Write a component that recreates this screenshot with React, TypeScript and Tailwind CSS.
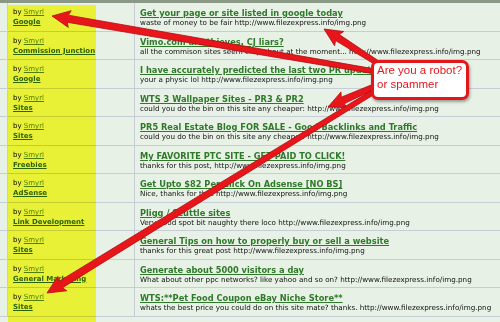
import React from "react";

type Row = { cat: string; title: string; desc: string };

const URL = "http://www.filezexpress.info/img.png";

const rows: Row[] = [
  { cat: "Google", title: "Get your page or site listed in google today", desc: `waste of money to be fair ${URL}` },
  { cat: "Commission Junction", title: "Vimo.com are thieves, CJ liars?", desc: `all the commison sites seem crap about at the moment... ${URL}` },
  { cat: "Google", title: "I have accurately predicted the last two PR updates", desc: `your a physic lol ${URL}` },
  { cat: "Sites", title: "WTS 3 Wallpaper Sites - PR3 & PR2", desc: `could you do the bin on this site any cheaper: ${URL}` },
  { cat: "Sites", title: "PR5 Real Estate Blog FOR SALE - Good Backlinks and Traffic", desc: `could you do the bin on this site any cheaper: ${URL}` },
  { cat: "Freebies", title: "My FAVORITE PTC SITE - GET PAID TO CLICK!", desc: `thanks for this post, ${URL}` },
  { cat: "AdSense", title: "Get Upto $82 Per Click On Adsense [NO BS]", desc: `Nice, thanks for that ${URL}` },
  { cat: "Link Development", title: "Pligg / Scuttle sites", desc: `Very good spot bit naughty there loco ${URL}` },
  { cat: "Sites", title: "General Tips on how to properly buy or sell a website", desc: `thanks for this great post ${URL}` },
  { cat: "General Marketing", title: "Generate about 5000 visitors a day", desc: `What about other ppc networks? like yahoo and so on? ${URL}` },
  { cat: "Sites", title: "WTS:**Pet Food Coupon eBay Niche Store**", desc: `whats the best price you could do on this site mate? thanks. ${URL}` },
];

function arrowPoints(x1: number, y1: number, x2: number, y2: number) {
  const dx = x2 - x1;
  const dy = y2 - y1;
  const L = Math.hypot(dx, dy);
  const ux = dx / L;
  const uy = dy / L;
  const nx = -uy;
  const ny = ux;
  const headLen = 16;
  const headW = 8.5;
  const tailW = 2.4;
  const neckW = 3.6;
  const bx = x2 - ux * headLen;
  const by = y2 - uy * headLen;
  const pts = [
    [x1 + nx * tailW, y1 + ny * tailW],
    [bx + nx * neckW, by + ny * neckW],
    [bx + nx * headW - ux * 2, by + ny * headW - uy * 2],
    [x2, y2],
    [bx - nx * headW - ux * 2, by - ny * headW - uy * 2],
    [bx - nx * neckW, by - ny * neckW],
    [x1 - nx * tailW, y1 - ny * tailW],
  ];
  return pts.map((p) => `${p[0].toFixed(1)},${p[1].toFixed(1)}`).join(" ");
}

const arrows: [number, number, number, number][] = [
  [378, 72, 52, 16],
  [382, 66, 324, 29],
  [380, 84, 328, 107],
  [380, 88, 47, 293],
];

export default function App() {
  return (
    <div
      className="relative w-[500px] h-[322px] overflow-hidden bg-[#e8f1e6]"
      style={{ fontFamily: '"DejaVu Sans", Verdana, sans-serif' }}
    >
      <div className="h-[3px] bg-[#8a9886]" />
      {rows.map((r, i) => (
        <div
          key={i}
          className={`flex border-b border-[#c6cdd8] ${i % 2 === 0 ? "h-[29px]" : "h-[28px]"}`}
        >
          <div className="w-[8px] shrink-0 border-r border-[#c6cdd8]" />
          <div className="w-[127px] shrink-0 border-r border-[#c6cdd8] pl-[5px] pt-[5px] text-[7px] leading-[9.5px] whitespace-nowrap">
            <div className="text-black">
              by <span className="text-[#4f7f16] underline">Smyrl</span>
            </div>
            <div className="font-bold text-[#2c6414] underline">{r.cat}</div>
          </div>
          <div className="flex-1 min-w-0 pl-[5px] pt-[5px] whitespace-nowrap overflow-hidden">
            <div className="text-[8.25px] leading-[10px] font-bold text-[#2f7a2a] underline">{r.title}</div>
            <div className="text-[7.2px] leading-[9px] text-[#111]">{r.desc}</div>
          </div>
        </div>
      ))}

      <div className="absolute left-[8px] top-[5px] w-[88px] h-[317px] bg-[#ffff3c] mix-blend-multiply" />

      <svg className="absolute left-0 top-0 pointer-events-none" width={500} height={322} viewBox="0 0 500 322">
        {arrows.map((a, i) => (
          <polygon
            key={i}
            points={arrowPoints(a[0], a[1], a[2], a[3])}
            fill="#e8161b"
            stroke="#b00c10"
            strokeWidth={0.8}
            strokeLinejoin="round"
          />
        ))}
      </svg>

      <div
        className="absolute left-[371px] top-[60px] w-[98px] h-[40px] rounded-[7px] border-[3px] border-[#e3171b] bg-white pl-[3px] pt-[1px] text-[11.5px] leading-[13.5px] text-[#e3171b] whitespace-nowrap shadow-[1px_2px_3px_rgba(0,0,0,0.35)]"
        style={{ fontFamily: '"Liberation Sans", Arial, sans-serif' }}
      >
        <div>Are you a robot?</div>
        <div>or spammer</div>
      </div>
    </div>
  );
}
